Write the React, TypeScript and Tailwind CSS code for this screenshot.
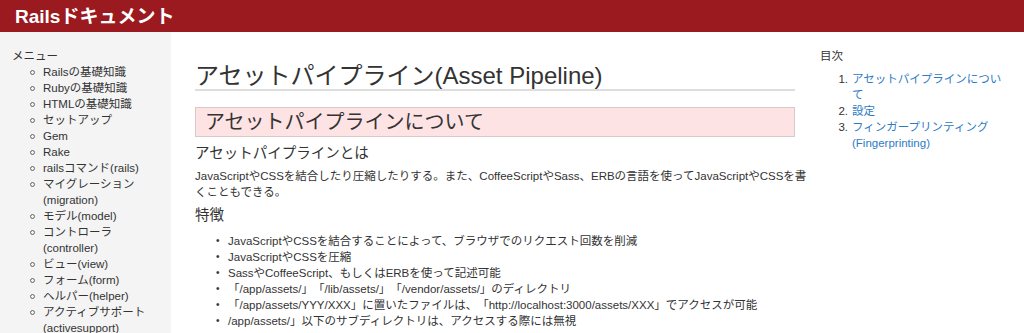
import React from "react"

const menu = [
  "Railsの基礎知識",
  "Rubyの基礎知識",
  "HTMLの基礎知識",
  "セットアップ",
  "Gem",
  "Rake",
  "railsコマンド(rails)",
  "マイグレーション(migration)",
  "モデル(model)",
  "コントローラ(controller)",
  "ビュー(view)",
  "フォーム(form)",
  "ヘルパー(helper)",
  "アクティブサポート(activesupport)",
]

const features = [
  "JavaScriptやCSSを結合することによって、ブラウザでのリクエスト回数を削減",
  "JavaScriptやCSSを圧縮",
  "SassやCoffeeScript、もしくはERBを使って記述可能",
  "「/app/assets/」「/lib/assets/」「/vendor/assets/」のディレクトリ",
  "「/app/assets/YYY/XXX」に置いたファイルは、「http://localhost:3000/assets/XXX」でアクセスが可能",
  "/app/assets/」以下のサブディレクトリは、アクセスする際には無視",
]

const toc = ["アセットパイプラインについて", "設定", "フィンガープリンティング(Fingerprinting)"]

export default function App() {
  return (
    <div className="min-h-screen bg-white text-[#333] [text-spacing-trim:space-all] font-['Liberation_Sans','Noto_Sans_CJK_JP',sans-serif]">
      {/* ヘッダー */}
      <header className="h-[32px] bg-[#9b1a1f] px-[15px] flex items-center">
        <h1 className="text-[19px] font-bold text-white leading-none">Railsドキュメント</h1>
      </header>

      <div className="flex items-start">
        {/* サイドメニュー */}
        <nav className="w-[171px] shrink-0 bg-[#f4f4f4] pt-[16px] pl-[12px] pr-[8px] pb-4 text-[11.5px] leading-[16px]">
          <p>メニュー</p>
          <ul className="pl-[18px]">
            {menu.map((item, index) => (
              <li key={index} className="flex items-start">
                <span className="mt-[6px] mr-[8px] w-[5px] h-[5px] shrink-0 rounded-full border border-[#666]" />
                <span>{item}</span>
              </li>
            ))}
          </ul>
        </nav>

        {/* 本文 */}
        <main className="ml-[24px] w-[600px] shrink-0 pt-[31px]">
          <h2 className="text-[24px] leading-[26px] font-normal border-b-2 border-[#dddddd]">
            アセットパイプライン(Asset Pipeline)
          </h2>
          <h3 className="mt-[16px] h-[30px] bg-[#fde3e3] border border-[#d9caca] pl-[9px] text-[20px] leading-[28px]">
            アセットパイプラインについて
          </h3>
          <h4 className="mt-[6px] text-[14.5px] leading-[20px]">アセットパイプラインとは</h4>
          <p className="mt-[5px] text-[11.5px] leading-[16px] whitespace-nowrap">
            JavaScriptやCSSを結合したり圧縮したりする。また、CoffeeScriptやSass、ERBの言語を使ってJavaScriptやCSSを書
            <br />
            くこともできる。
          </p>
          <h4 className="mt-[5px] text-[14.5px] leading-[20px]">特徴</h4>
          <ul className="mt-[8px] pl-[21px] text-[11.5px] leading-[16px]">
            {features.map((item, index) => (
              <li key={index} className="flex items-start whitespace-nowrap">
                <span className="w-[12px] shrink-0 text-[10px]">•</span>
                <span>{item}</span>
              </li>
            ))}
          </ul>
        </main>

        {/* 目次 */}
        <aside className="ml-[25px] pt-[16px] text-[11.5px] leading-[16px]">
          <p>目次</p>
          <ol className="mt-[7px]">
            {toc.map((item, index) => (
              <li key={index} className="flex items-start">
                <span className="w-[32px] shrink-0 text-right pr-[4px]">{index + 1}.</span>
                <a href="#" className="w-[155px] text-[#2e7bc4]">
                  {item}
                </a>
              </li>
            ))}
          </ol>
        </aside>
      </div>
    </div>
  )
}
